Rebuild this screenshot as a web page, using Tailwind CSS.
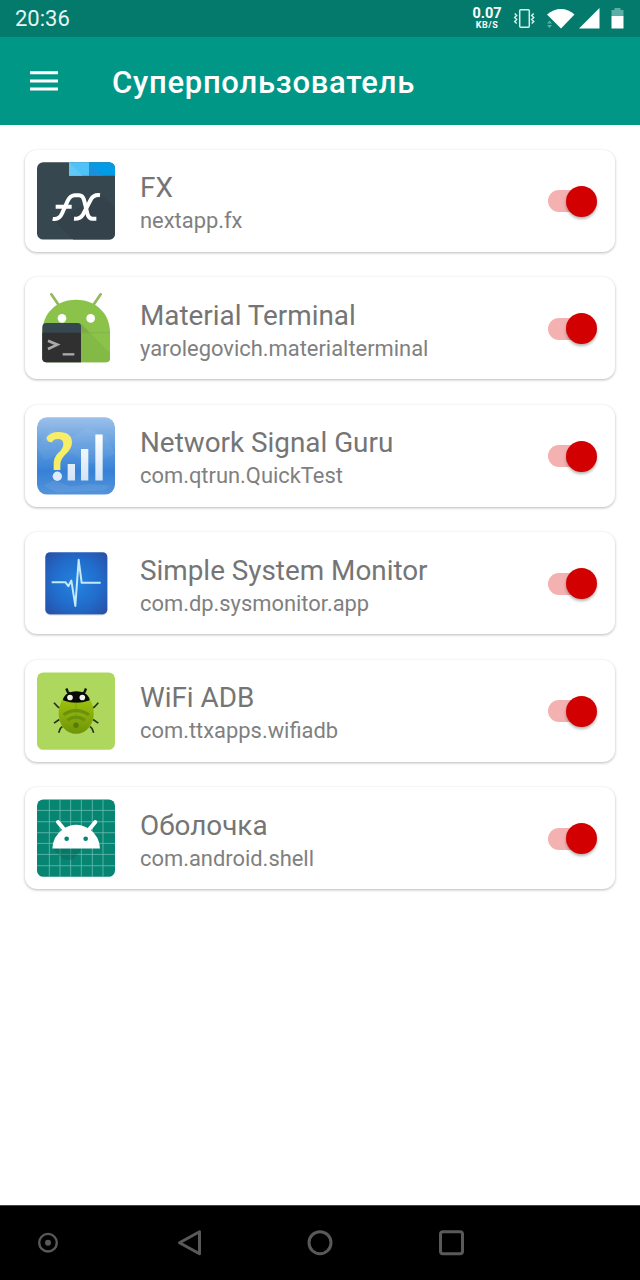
<!DOCTYPE html>
<html lang="ru">
<head>
  <meta charset="UTF-8">
  <meta name="viewport" content="width=device-width, initial-scale=1.0">
  <title>Суперпользователь</title>
  <script src="https://cdn.jsdelivr.net/npm/@tailwindcss/browser@4"></script>
</head>
<body class="bg-white font-['Roboto',sans-serif]">
  <div class="w-[640px] h-[1280px] flex flex-col overflow-hidden">
    <!-- Status bar -->
    <div class="h-[37px] shrink-0 bg-[#047a6c] text-white flex items-center justify-between pl-[15px]">
      <span class="text-[22px] leading-[37px] text-[#e4f5f3]">20:36</span>
      <div class="flex items-center">
        <div class="w-[34px] mr-[6px] text-center font-bold">
          <div class="text-[14.5px] leading-[15px] -mt-px">0.07</div>
          <div class="text-[9px] leading-[9px] tracking-[0.6px]">KB/S</div>
        </div>
        <svg class="w-[130px] h-[37px]" viewBox="0 0 130 37">
          <g fill="none" stroke="#d5efec" stroke-width="1.5">
            <rect x="9.700" y="9.700" width="9.600" height="17.600" rx="1"/>
            <path d="M5 13l2 2-2 2 2 2-2 2 2 2M24 13l-2 2 2 2-2 2 2 2-2 2" transform="translate(-.3 .5)"/>
          </g>
          <path d="M37 14.500C45 7 57 7 64.500 14.500L51 28.500z" fill="#fff"/>
          <path d="M37 23.500l2.500-3 2.500 3zM37 25l2.500 3 2.500-3z" fill="#58b3a9"/>
          <path d="M89.500 8v20.500H69z" fill="#fff"/>
          <path d="M101.500 16.500V10h3V8h6v2h3v6.500z" fill="#5cafa6"/>
          <path d="M101.500 16h12v12.500h-12z" fill="#fff"/>
        </svg>
      </div>
    </div>

    <!-- Toolbar -->
    <div class="h-[87.5px] shrink-0 bg-[#019787] text-white flex items-center pl-[30px]">
      <svg class="w-7 h-5 mt-px" viewBox="0 0 28 20" fill="#fff">
        <path d="M0 .3h28v3H0zM0 8.500h28v3H0zM0 16.500h28v3H0z"/>
      </svg>
      <h1 class="ml-[54px] mt-[5px] text-[31px] font-medium tracking-[0.75px]">Суперпользователь</h1>
    </div>

    <!-- App list -->
    <ul id="apps" class="grow px-[25px] pt-[25px] flex flex-col gap-[25.5px]"></ul>

    <!-- Navigation bar -->
    <div class="h-[75px] shrink-0 bg-black border-t border-[#444]">
      <svg class="w-[640px] h-[74px]" viewBox="0 0 640 74" fill="none" stroke="#595959" stroke-width="3">
        <circle cx="48" cy="36.700" r="8.800" stroke-width="2.400"/>
        <circle cx="48" cy="36.700" r="3" fill="#595959" stroke="none"/>
        <path d="M179.500 36.700l20-11v22z" stroke-linejoin="round"/>
        <circle cx="320" cy="36.700" r="11"/>
        <rect x="440.500" y="25.700" width="22" height="22" rx="2.500"/>
      </svg>
    </div>
  </div>

  <script>
    const apps = [
      {
        name: "FX",
        pkg: "nextapp.fx",
        icon: `
          <svg class="size-[78px] shrink-0" viewBox="51 49.5 234 234">
            <rect x="51" y="50" width="234" height="232" rx="19" fill="#37474f"/>
            <path d="M239 144l46 42v77q0 19-19 19H160l-58-56 60-30z" fill="#34434b"/>
            <path d="M147 50h60v41h-60z" fill="#4fc3f7"/>
            <path d="M147 50l40 41h-40z" fill="#62c9f6"/>
            <path d="M207 50h59q19 0 19 19v22h-78z" fill="#039be5"/>
            <path d="M207 50l42 41h-42z" fill="#1a91dc"/>
            <g fill="none" stroke="#fff" stroke-width="12">
              <path d="M98 220q19 4 28-16l17-38q8-17 22-17h12q11 0 15 14l10 41q4 16 16 16h11"/>
              <path d="M107 184h48M240 149q-20-2-28 14l-23 44q-8 14-27 13"/>
            </g>
          </svg>`
      },
      {
        name: "Material Terminal",
        pkg: "yarolegovich.materialterminal",
        icon: `
          <svg class="size-[78px] shrink-0" viewBox="21 12 234 234">
            <path d="M64 28l24 35M212 28l-24 35" stroke="#93b75c" stroke-width="8" stroke-linecap="round"/>
            <path d="M37 143C37 82 82 44 138 44s102 38 102 99v76q0 13-13 13H50q-13 0-13-13z" fill="#8bc34a"/>
            <path d="M152 115l28 28h-28z" fill="#7dab47"/>
            <path d="M153 143h27l60 61v15q0 13-13 13h-74z" fill="#83b945"/>
            <path d="M153 143h87" stroke="#7fae48" stroke-width="2"/>
            <circle cx="96" cy="100" r="13" fill="#fff"/>
            <circle cx="182" cy="100" r="13" fill="#fff"/>
            <path d="M49 114h94q10 0 10 10v108H50q-13 0-13-13v-92q0-13 12-13z" fill="#37474f"/>
            <path d="M37 143h116v89H50q-13 0-13-13z" fill="#303030"/>
            <path d="M54 167l28 12-28 13" fill="none" stroke="#aaa" stroke-width="8"/>
            <path d="M98 208h35" stroke="#aaa" stroke-width="7"/>
          </svg>`
      },
      {
        name: "Network Signal Guru",
        pkg: "com.qtrun.QuickTest",
        icon: `
          <svg class="size-[78px] shrink-0" viewBox="21 19.2 234 234">
            <defs>
              <linearGradient id="sky" x2="0" y2="1">
                <stop offset="0" stop-color="#9cc0ea"/>
                <stop offset=".35" stop-color="#649fdf"/>
                <stop offset=".7" stop-color="#3681d6"/>
                <stop offset="1" stop-color="#5594da"/>
              </linearGradient>
              <linearGradient id="bars" x2="0" y2="1">
                <stop offset="0" stop-color="#fff"/>
                <stop offset="1" stop-color="#d3e3f6"/>
              </linearGradient>
            </defs>
            <rect x="21" y="20" width="234" height="232" rx="30" fill="url(#sky)"/>
            <path d="M21 110l40-50 70 18 40-28 60 30 24 50-70 30-80-40-60 30z" fill="#fff" opacity=".05"/>
            <path d="M40 225l30-15 50 18 60-8 60 5-20 15-140 6z" fill="#fff" opacity=".07"/>
            <path d="M113 160h22v50h-22zM153 115h22v95h-22zM196 72h22v138h-22z" fill="url(#bars)"/>
            <path d="M50 80q12-16 36-16 40 0 40 32 0 16-16 32-19 17-19 34v16H71v-18q0-20 15-34 14-13 14-26 0-15-16-15-14 0-18 10-18 0-16-15z" fill="#f6ee66"/>
            <circle cx="82" cy="197" r="14" fill="#e0ebf8"/>
          </svg>`
      },
      {
        name: "Simple System Monitor",
        pkg: "com.dp.sysmonitor.app",
        icon: `
          <svg class="size-[78px] shrink-0" viewBox="21 11.4 234 234">
            <defs>
              <radialGradient id="pulse" r=".68">
                <stop offset="0" stop-color="#2583e0"/>
                <stop offset=".55" stop-color="#216dcc"/>
                <stop offset="1" stop-color="#2850a8"/>
              </radialGradient>
            </defs>
            <rect x="46" y="39" width="186" height="186" rx="15" fill="#bcc4d2"/>
            <rect x="46" y="36" width="186" height="186" rx="14" fill="url(#pulse)"/>
            <path d="M65 126h41l9 12 9-17 12 76 10-138 9 69h57" fill="none" stroke="#c3e9fb" stroke-width="6" stroke-linejoin="round"/>
          </svg>`
      },
      {
        name: "WiFi ADB",
        pkg: "com.ttxapps.wifiadb",
        icon: `
          <svg class="size-[78px] shrink-0" viewBox="21 18.6 234 234">
            <defs>
              <linearGradient id="shell" x2="0" y2="1">
                <stop offset="0" stop-color="#a0c40d"/>
                <stop offset="1" stop-color="#6f9408"/>
              </linearGradient>
            </defs>
            <rect x="21" y="20" width="234" height="232" rx="19" fill="#aed75d"/>
            <g fill="none" stroke="#26331a" stroke-width="5">
              <path d="M119 84l-6-6-4-10M158 84l6-6 4-10" stroke="#111" stroke-width="7"/>
              <path d="M93 128l-9-4-12-13M184 128l9-4 12-13M88 161l-16 11M189 161l16 11M97 182l-6 6-5 13M180 182l6 6 5 13"/>
            </g>
            <path d="M98 100Q86 118 86 143c0 34 22 61 52 61s53-27 53-61q0-25-12-43-40-10-81 0z" fill="url(#shell)"/>
            <path d="M101 104q-4-1 0-9 10-19 38-19t38 19q4 8 0 9-38 13-76 0z" fill="#080b04"/>
            <circle cx="120" cy="95" r="8.500" fill="#eef0ea"/>
            <circle cx="157" cy="95" r="8.500" fill="#eef0ea"/>
            <path d="M138 110v93" stroke="#7a9e0b" stroke-width="2"/>
            <g fill="none" stroke="#6b920b" stroke-width="9">
              <path d="M100 147q38-25 77 0M112 163q26-18 53 0"/>
            </g>
            <circle cx="138" cy="178" r="8" fill="#557b08"/>
          </svg>`
      },
      {
        name: "Оболочка",
        pkg: "com.android.shell",
        icon: `
          <svg class="size-[78px] shrink-0" viewBox="21 25.8 234 234">
            <rect x="21" y="27" width="234" height="232" rx="19" fill="#078573"/>
            <path d="M58 27v232M90 27v232M122 27v232M154 27v232M187 27v232M219 27v232M21 60h234M21 94h234M21 127h234M21 159h234M21 192h234M21 226h234" stroke="#68b9ac" stroke-width="2.500"/>
            <path d="M68 174h90l-30 34h-26z" fill="#056456" opacity=".4"/>
            <path d="M84 95l20 24M196 95l-20 24" stroke="#fff" stroke-width="12" stroke-linecap="round"/>
            <path d="M67 174q2-36 30-56 40-30 84 0 27 20 29 56z" fill="#fff"/>
            <circle cx="110" cy="145" r="7" fill="#078573"/>
            <circle cx="167" cy="145" r="7" fill="#078573"/>
          </svg>`
      }
    ];

    document.getElementById("apps").innerHTML = apps.map(app => `
      <li class="h-[102px] shrink-0 flex items-center rounded-xl bg-white shadow-[0_1px_3px_rgba(0,0,0,0.28)] px-3">
        ${app.icon}
        <div class="ml-[25px] mt-2 grow">
          <div class="text-[27.85px] leading-[33px] text-[#757575]">${app.name}</div>
          <div class="text-[21.9px] leading-[34px] text-[#808080]">${app.pkg}</div>
        </div>
        <div class="relative w-[49px] h-[31px] mt-px mr-[6px] flex items-center justify-end">
          <span class="absolute left-0 w-10 h-[22px] rounded-full bg-[#f4b1b1]"></span>
          <span class="relative size-[31px] rounded-full bg-[#d20000] shadow-[0_2px_3px_rgba(0,0,0,0.3)]"></span>
        </div>
      </li>`).join("");
  </script>
</body>
</html>
